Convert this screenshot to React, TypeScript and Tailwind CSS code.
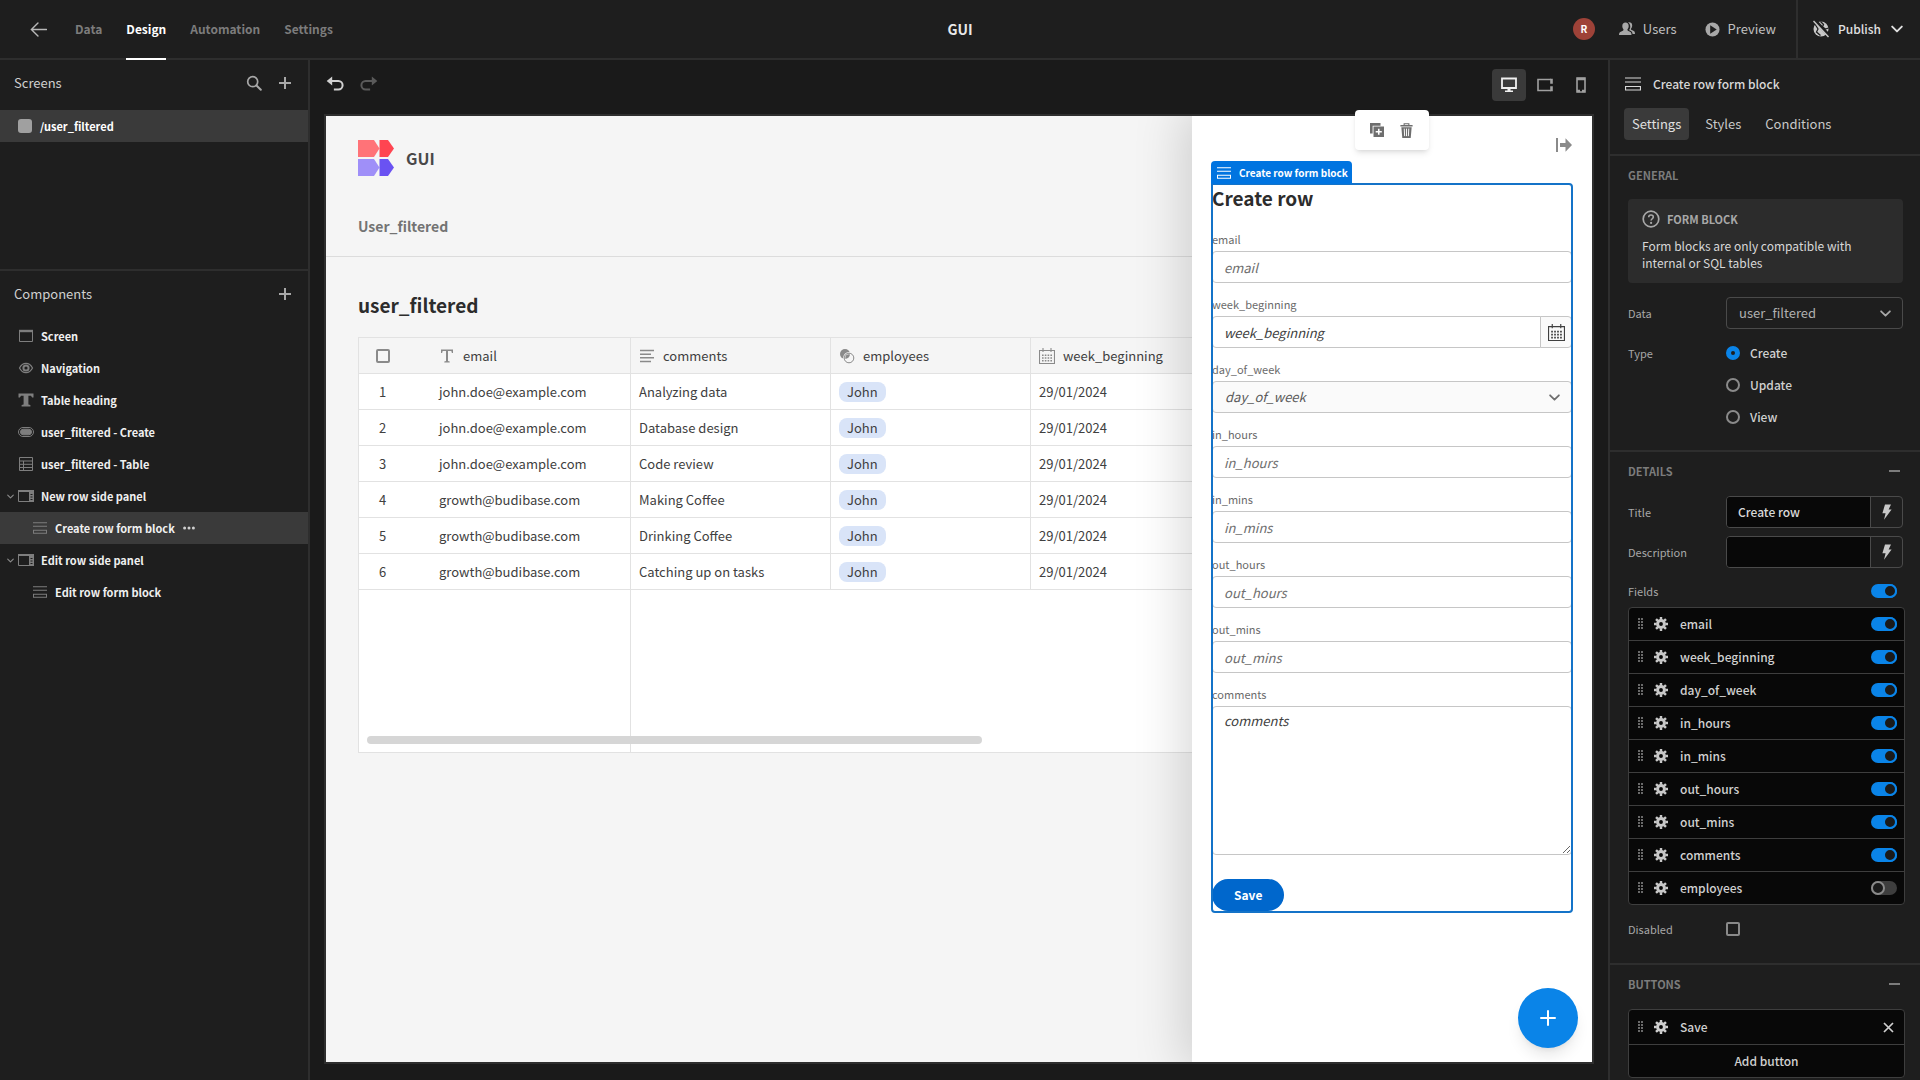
import { useState } from 'react';
import type { ReactNode } from 'react';

const rows = [
  ['john.doe@example.com', 'Analyzing data'],
  ['john.doe@example.com', 'Database design'],
  ['john.doe@example.com', 'Code review'],
  ['growth@budibase.com', 'Making Coffee'],
  ['growth@budibase.com', 'Drinking Coffee'],
  ['growth@budibase.com', 'Catching up on tasks'],
];

const tree = [
  { name: 'Screen', icon: 'screen' },
  { name: 'Navigation', icon: 'eye' },
  { name: 'Table heading', icon: 'text' },
  { name: 'user_filtered - Create', icon: 'button' },
  { name: 'user_filtered - Table', icon: 'table' },
  { name: 'New row side panel', icon: 'panel', open: true },
  { name: 'Create row form block', icon: 'form', nested: true, selected: true },
  { name: 'Edit row side panel', icon: 'panel', open: true },
  { name: 'Edit row form block', icon: 'form', nested: true },
];

const fieldNames = [
  'email',
  'week_beginning',
  'day_of_week',
  'in_hours',
  'in_mins',
  'out_hours',
  'out_mins',
  'comments',
  'employees',
];

type IconProps = { className?: string };

function Svg({ className = '', box = 16, children }: IconProps & { box?: number; children: ReactNode }) {
  return (
    <svg viewBox={`0 0 ${box} ${box}`} className={`shrink-0 ${className}`} fill="none" stroke="currentColor" aria-hidden="true">
      {children}
    </svg>
  );
}

function PlusIcon({ className }: IconProps) {
  return (
    <Svg className={className}>
      <path d="M8 2v12M2 8h12" strokeWidth="2" />
    </Svg>
  );
}

function ChevronIcon({ className }: IconProps) {
  return (
    <Svg className={className} box={10}>
      <path d="M1 3l4 4 4-4" strokeWidth="1.6" strokeLinecap="round" strokeLinejoin="round" />
    </Svg>
  );
}

function GearIcon({ className }: IconProps) {
  return (
    <Svg className={className}>
      <circle cx="8" cy="8" r="3.9" strokeWidth="3.4" />
      <path
        d="M8 0v3M8 13v3M0 8h3M13 8h3M2.3 2.3l2.2 2.2M11.5 11.5l2.2 2.2M2.3 13.7l2.2-2.2M11.5 4.5l2.2-2.2"
        strokeWidth="2.8"
      />
    </Svg>
  );
}

function BoltIcon({ className }: IconProps) {
  return (
    <Svg className={className}>
      <path d="M6 .5h6L9.6 5.6h3L5 15.8l1.6-6.6H3.4z" fill="currentColor" stroke="none" />
    </Svg>
  );
}

function DragIcon({ className }: IconProps) {
  return (
    <svg viewBox="0 0 6 12" className={`shrink-0 ${className}`} fill="currentColor" aria-hidden="true">
      {[0, 3, 6, 9].map((y) => (
        <path key={y} d={`M0 ${y}h2v2h-2zM3 ${y}h2v2h-2z`} />
      ))}
    </svg>
  );
}

function FormIcon({ className }: IconProps) {
  return (
    <Svg className={className}>
      <path d="M0 2h16M0 6h16M.5 10.5h15V14H.5z" strokeWidth="1.2" />
    </Svg>
  );
}

function CalendarIcon({ className }: IconProps) {
  return (
    <Svg className={className}>
      <path d="M.5 2.5h15v13H.5zM4 0v4M12 0v4" strokeWidth="1.1" />
      <path d="M3 7.2h10M3 10h10M3 12.8h10" strokeWidth="1.6" strokeDasharray="1.6 1.2" />
    </Svg>
  );
}

function TreeIcon({ name, className }: IconProps & { name: string }) {
  if (name === 'form') return <FormIcon className={className} />;
  return (
    <Svg className={className}>
      {name === 'screen' && (
        <>
          <path d="M1.5 2.5h13v11h-13z" />
          <path d="M1 3h14" strokeWidth="2.4" />
        </>
      )}
      {name === 'eye' && (
        <>
          <path d="M1.5 8C3 5 5.3 3.4 8 3.4S13 5 14.5 8c-1.5 3-3.8 4.6-6.5 4.6S3 11 1.5 8z" strokeWidth="1.2" />
          <circle cx="8" cy="8" r="2.6" strokeWidth="2" />
        </>
      )}
      {name === 'text' && (
        <path
          d="M.5 1.5h15v4h-1.4L13 3.7h-2.6v8.8l2 .6v1.4H3.600v-1.4l2-.6V3.7H3L1.900 5.5H.5z"
          fill="currentColor"
          stroke="none"
        />
      )}
      {name === 'button' && (
        <>
          <rect x=".5" y="3.5" width="15" height="9" rx="4.5" />
          <rect x="2.5" y="5.2" width="11" height="5.6" rx="2.8" fill="currentColor" />
        </>
      )}
      {name === 'table' && <path d="M1.5 1.5h13v13h-13zM1.5 5h13M1.5 8.3h13M1.5 11.5h13M5.5 5v9.5" />}
      {name === 'panel' && (
        <>
          <path d="M.5 2.5h15v11H.5z" />
          <path d="M0 3h16" strokeWidth="2" />
          <path d="M11 4h5v10h-5z" fill="currentColor" stroke="none" />
          <path d="M12.5 6.5h2M12.5 9h2M12.5 11.5h2" stroke="#1e1e1e" />
        </>
      )}
    </Svg>
  );
}

function Logo() {
  return (
    <svg viewBox="0 0 36 36" className="size-9" aria-hidden="true">
      <path d="M0 0h16l5.5 8.5L16 17H0z" fill="#ff7378" />
      <path d="M21.5 0H30l6 8.5-6 8.5h-8.5z" fill="#ff4551" />
      <path d="M0 19h16l5.5 8.5L16 36H0z" fill="#9f8ff8" />
      <path d="M21.5 19H30l6 8.5-6 8.5h-8.5z" fill="#6a52f2" />
    </svg>
  );
}

function Toggle({ label, defaultChecked = true }: { label: string; defaultChecked?: boolean }) {
  return (
    <input
      type="checkbox"
      role="switch"
      aria-label={label}
      defaultChecked={defaultChecked}
      className="relative h-3.5 w-[26px] shrink-0 appearance-none rounded-full bg-[#3e3e3e] before:absolute before:top-0 before:left-0 before:size-3.5 before:rounded-full before:border-2 before:border-[#8a8a8a] before:bg-[#1a1a1a] checked:bg-[#0a84e8] checked:before:left-3 checked:before:border-[#0a84e8]"
    />
  );
}

function TopBar() {
  return (
    <header className="grid h-[60px] shrink-0 grid-cols-[1fr_auto_1fr] items-stretch border-b-2 border-[#2e2e2e] bg-[#1e1e1e]">
      <nav className="flex items-stretch gap-6 pl-[30px] text-[12px] font-bold text-[#7c7c7c]">
        <a href="#back" aria-label="Back" className="mr-1 flex items-center text-[#b8b8b8]">
          <Svg className="size-[17px]">
            <path d="M15.5 8h-14M7.5 1.8L1.3 8l6.2 6.2" strokeWidth="1.3" strokeLinecap="round" />
          </Svg>
        </a>
        <a href="#data" className="flex items-center">Data</a>
        <a href="#design" className="-mb-0.5 flex items-center border-b-2 border-white text-white">Design</a>
        <a href="#automation" className="flex items-center">Automation</a>
        <a href="#settings" className="flex items-center">Settings</a>
      </nav>
      <h1 className="flex items-center text-[14px] font-bold text-[#e8e8e8]">GUI</h1>
      <div className="flex items-stretch justify-end text-[#c0c0c0]">
        <span className="mr-6 flex size-[22px] items-center justify-center self-center rounded-full bg-[#9e4238] text-[10px] font-bold text-white">
          R
        </span>
        <button className="mr-7 flex items-center gap-2">
          <svg viewBox="0 0 16 16" className="size-4" fill="#a8a8a8" aria-hidden="true">
            <path d="M6.5 1.5c2 0 3.2 1.500 3.2 3.5 0 1.700-.7 2.700-1.300 3.500-.2.900.3 1.200 2.100 1.900 1.600.6 2 1.500 2 3.600H0c0-2.100.6-3 2.300-3.600 1.800-.7 2.400-1 2.200-1.900C3.900 7.700 3.300 6.700 3.300 5c0-2 1.200-3.500 3.200-3.500z" />
            <path d="M10 1.3c2 0 3.2 1.200 3.2 3.200 0 1.600-.7 2.600-1.300 3.300-.2.800.3 1.100 2 1.800 1.400.5 2.100 1.300 2.100 3.400h-2.400c-.2-1.900-1-2.800-2.900-3.500-.6-.3-.5-.6-.3-1C12 6.500 11.500 2.500 9 1.500z" />
          </svg>
          Users
        </button>
        <button className="mr-5 flex items-center gap-2">
          <svg viewBox="0 0 16 16" className="size-[15px]" aria-hidden="true">
            <circle cx="8" cy="8" r="7.5" fill="#a8a8a8" />
            <path d="M5.5 3.5l7 4.5-7 4.5z" fill="#1e1e1e" />
          </svg>
          Preview
        </button>
        <button className="flex items-center border-l-2 border-[#2e2e2e] pr-[17px] pl-3.5 text-[12px] font-medium text-[#e0e0e0]">
          <svg viewBox="0 0 18 18" className="mr-2 size-[18px]" aria-hidden="true">
            <circle cx="9" cy="9" r="7.5" fill="#c8c8c8" />
            <path d="M8.5 1.5l3 3-1 2.5 3 2 3-1M3 4l3 5-1.5 3 4 3.5" fill="none" stroke="#1e1e1e" strokeWidth="1.3" />
            <path d="M2.5 0L18 16.5" stroke="#1e1e1e" strokeWidth="3.5" />
            <path d="M1.5 1l15 16" stroke="#c8c8c8" strokeWidth="1.4" />
          </svg>
          Publish
          <ChevronIcon className="ml-2.5 size-3" />
        </button>
      </div>
    </header>
  );
}

function LeftPanel() {
  return (
    <aside className="flex w-[310px] shrink-0 flex-col border-r-2 border-[#2e2e2e] bg-[#1e1e1e]">
      <section className="h-[211px] border-b-2 border-[#2e2e2e]">
        <div className="flex h-[50px] items-center pr-[15px] pb-1 pl-3.5">
          <h2 className="flex-1 text-[#d0d0d0]">Screens</h2>
          <button aria-label="Search screens" className="mr-[15px]">
            <Svg className="size-4 text-[#a8a8a8]">
              <circle cx="6.7" cy="6.7" r="5" strokeWidth="1.7" />
              <path d="M10.5 10.5l4.3 4.3" strokeWidth="2" strokeLinecap="round" />
            </Svg>
          </button>
          <button aria-label="Add screen">
            <PlusIcon className="size-4 text-[#a8a8a8]" />
          </button>
        </div>
        <a href="#user_filtered" className="flex h-8 items-center gap-2 bg-[#3a3a3a] pl-[18px] text-[11px] font-bold text-white">
          <span className="size-3.5 rounded-[3px] bg-[#a0a0a0]" />
          /user_filtered
        </a>
      </section>
      <section>
        <div className="flex h-[49px] items-center pr-[15px] pb-1 pl-3.5">
          <h2 className="flex-1 text-[#d0d0d0]">Components</h2>
          <button aria-label="Add component">
            <PlusIcon className="size-4 text-[#a8a8a8]" />
          </button>
        </div>
        <ul>
          {tree.map((item) => (
            <li
              key={item.name}
              className={`flex h-8 items-center text-[11px] font-bold text-[#f0f0f0] ${item.nested ? 'pl-8' : 'pl-[7px]'} ${item.selected ? 'bg-[#3a3a3a]' : ''}`}
            >
              {!item.nested && (
                <span className="flex w-[11px] text-[#8a8a8a]">{item.open && <ChevronIcon className="size-[7px]" />}</span>
              )}
              <TreeIcon name={item.icon} className={`${item.nested ? 'mr-2 ml-px size-3.5' : 'mr-[7px] size-4'} text-[#7e7e7e]`} />
              <span>{item.name}</span>
              {item.selected && (
                <button aria-label="More" className="ml-2 text-[#d0d0d0]">
                  <svg viewBox="0 0 12 4" className="h-1 w-3" fill="currentColor" aria-hidden="true">
                    <circle cx="1.6" cy="2" r="1.5" />
                    <circle cx="6" cy="2" r="1.5" />
                    <circle cx="10.4" cy="2" r="1.5" />
                  </svg>
                </button>
              )}
            </li>
          ))}
        </ul>
      </section>
    </aside>
  );
}

function HeaderCell({ icon, children }: { icon: ReactNode; children: ReactNode }) {
  return (
    <div className="flex items-center gap-2 text-[#8a8a8a]">
      {icon}
      <span className="text-[#404040]">{children}</span>
    </div>
  );
}

function DataTable() {
  return (
    <div className="relative h-[416px] overflow-hidden border border-[#e2e2e2] bg-white">
      <table className="w-full table-fixed border-separate border-spacing-0 text-left text-[#404040]">
        <colgroup>
          <col className="w-[72px]" />
          <col className="w-[200px]" />
          <col className="w-[200px]" />
          <col className="w-[200px]" />
          <col />
        </colgroup>
        <thead className="bg-[#f5f5f5]">
          <tr className="h-9 *:border-b *:border-[#e2e2e2] *:p-0 *:font-normal">
            <th className="pl-[17px]!">
              <input
                type="checkbox"
                aria-label="Select all rows"
                className="block size-3.5 appearance-none rounded-[2px] border-2 border-[#8a8a8a]"
              />
            </th>
            <th className="border-r pl-2!">
              <HeaderCell
                icon={
                  <svg viewBox="0 0 16 16" className="size-4" fill="currentColor" aria-hidden="true">
                    <path d="M2 1.5h12V5h-1.1L12.3 3H9v10l1.7.4v1H5.3v-1L7 13V3H3.700L3.100 5H2z" />
                  </svg>
                }
              >
                email
              </HeaderCell>
            </th>
            <th className="border-r pl-2!">
              <HeaderCell
                icon={
                  <Svg className="size-4">
                    <path d="M1 2.5h14M1 6.2h11M1 9.8h14M1 13.5h11" strokeWidth="1.5" />
                  </Svg>
                }
              >
                comments
              </HeaderCell>
            </th>
            <th className="border-r pl-2!">
              <HeaderCell
                icon={
                  <Svg className="size-4">
                    <circle cx="6" cy="6" r="5" fill="currentColor" stroke="none" />
                    <circle cx="10" cy="10" r="4.8" stroke="#f5f5f5" strokeWidth="2.2" />
                    <circle cx="10" cy="10" r="4.8" />
                  </Svg>
                }
              >
                employees
              </HeaderCell>
            </th>
            <th className="pl-2!">
              <HeaderCell icon={<CalendarIcon className="size-4" />}>week_beginning</HeaderCell>
            </th>
          </tr>
        </thead>
        <tbody>
          {rows.map(([email, comment], i) => (
            <tr key={i} className="h-9 *:border-b *:border-[#e2e2e2] *:py-0 *:pr-0">
              <td className="pl-5">{i + 1}</td>
              <td className="border-r pl-2">{email}</td>
              <td className="border-r pl-2">{comment}</td>
              <td className="border-r pl-2">
                <span className="inline-block rounded-lg bg-[#d9e4f8] px-2 leading-5">John</span>
              </td>
              <td className="pl-2">29/01/2024</td>
            </tr>
          ))}
          <tr className="h-[170px]">
            <td />
            <td className="border-r border-[#e2e2e2]" />
            <td colSpan={3} />
          </tr>
        </tbody>
      </table>
      <div className="absolute bottom-2 left-2 h-2 w-[615px] rounded-full bg-[#d6d6d6]" />
    </div>
  );
}

const inputClass =
  'h-8 w-full rounded-[4px] border border-[#c6c6c6] bg-white px-[11px] text-[#404040] italic placeholder:text-[#6e6e6e]';

function FormField({ name }: { name: string }) {
  const id = `form-${name}`;
  return (
    <div>
      <label htmlFor={id} className="flex h-[25px] items-center text-[11px] text-[#6a6a6a]">
        {name}
      </label>
      {name === 'week_beginning' ? (
        <div className="flex">
          <input id={id} placeholder={name} className={`${inputClass} rounded-r-none placeholder:text-[#404040]!`} />
          <button
            type="button"
            aria-label="Pick a date"
            className="-ml-px flex h-8 w-8 shrink-0 items-center justify-center rounded-r-[4px] border border-[#c6c6c6] bg-[#fafafa] text-[#404040]"
          >
            <CalendarIcon className="size-[17px]" />
          </button>
        </div>
      ) : name === 'day_of_week' ? (
        <div className="relative">
          <select id={id} className={`${inputClass} appearance-none bg-[#fafafa]! px-3! text-[#5a5a5a]!`}>
            <option>day_of_week</option>
          </select>
          <ChevronIcon className="pointer-events-none absolute top-[11px] right-3 size-[11px] text-[#6e6e6e]" />
        </div>
      ) : name === 'comments' ? (
        <textarea id={id} placeholder={name} className={`${inputClass} block h-[149px]! py-1 placeholder:text-[#404040]!`} />
      ) : (
        <input id={id} placeholder={name} className={inputClass} />
      )}
    </div>
  );
}

function SidePanel() {
  return (
    <div className="absolute inset-y-0 right-0 w-[400px] bg-white px-5 shadow-[0_0_48px_8px_rgba(0,0,0,0.16)]">
      <div className="flex h-[68px] justify-end pt-[21px]">
        <button aria-label="Close panel" className="h-4 text-[#8a8a8a]">
          <svg viewBox="0 0 16 16" className="size-4" fill="currentColor" aria-hidden="true">
            <path d="M0 1h2v14H0zM4 6h5.5V1.2L16 8l-6.5 6.8V10H4z" />
          </svg>
        </button>
      </div>
      <form className="relative pb-px">
        <h2 className="text-[19px] leading-7 font-bold text-[#2c2c2c]">Create row</h2>
        <div className="mt-3.5 flex flex-col gap-2">
          {fieldNames.slice(0, 8).map((name) => (
            <FormField key={name} name={name} />
          ))}
        </div>
        <button type="button" className="mt-6 block h-8 rounded-full bg-[#0067cc] px-[22px] text-[12px] font-bold text-white">
          Save
        </button>
        {/* selection outline sits above the block's own content */}
        <div className="pointer-events-none absolute -inset-px rounded-[4px] rounded-tl-none border-2 border-[#1473c8]" />
        <div className="absolute bottom-full -left-px flex h-[23px] items-center gap-2 rounded-t-[4px] bg-[#0074e0] pr-1 pl-1.5 text-[10px] font-bold whitespace-nowrap text-white">
          <FormIcon className="size-3.5" />
          Create row form block
        </div>
      </form>
      <button
        aria-label="Add"
        className="absolute right-3.5 bottom-3.5 flex size-[60px] items-center justify-center rounded-full bg-[#0a84e8] text-white shadow-lg"
      >
        <Svg className="size-4">
          <path d="M8 1v14M1 8h14" strokeWidth="2" strokeLinecap="round" />
        </Svg>
      </button>
    </div>
  );
}

function Canvas() {
  const [device, setDevice] = useState('desktop');
  const deviceIcons: Record<string, ReactNode> = {
    desktop: (
      <>
        <path d="M1 1.5h14V11H1z" strokeWidth="1.8" />
        <path d="M6.5 11h3v2.5H12V15H4v-1.5h2.5z" fill="currentColor" stroke="none" />
      </>
    ),
    tablet: (
      <>
        <path d="M14 2.5H1v11h13" strokeWidth="1.6" />
        <path d="M14.5 1.7v5M14.5 9.3v5" strokeWidth="2.6" />
      </>
    ),
    mobile: (
      <>
        <path d="M4 1h8v14H4z" strokeWidth="1.6" />
        <path d="M4 2h8M4 14h3M9 14h3" strokeWidth="2.4" />
      </>
    ),
  };
  return (
    <main className="flex min-w-0 flex-1 flex-col bg-[#1a1a1a] px-3.5 pb-4">
      <div className="flex h-[54px] items-center pb-1">
        <div className="flex flex-1 gap-4 pl-0.5">
          <button aria-label="Undo" className="text-[#d0d0d0]">
            <Svg className="size-[18px]">
              <path d="M3 4.5h8a3.7 3.7 0 010 7.5H7" strokeWidth="1.8" />
              <path d="M5.5.5v8L.6 4.5z" fill="currentColor" stroke="none" />
            </Svg>
          </button>
          <button aria-label="Redo" className="text-[#5a5a5a]">
            <Svg className="size-[18px]">
              <path d="M13 4.5H5A3.7 3.7 0 005 12h4" strokeWidth="1.8" />
              <path d="M10.5.5v8l4.900-4z" fill="currentColor" stroke="none" />
            </Svg>
          </button>
        </div>
        <div className="-mr-1 flex gap-0.5">
          {Object.keys(deviceIcons).map((name) => (
            <button
              key={name}
              aria-label={name}
              onClick={() => setDevice(name)}
              className={`flex h-8 w-[34px] items-center justify-center rounded-[4px] ${device === name ? 'bg-[#3a3a3a] text-[#f0f0f0]' : 'text-[#a0a0a0]'}`}
            >
              <Svg className="size-4">{deviceIcons[name]}</Svg>
            </button>
          ))}
        </div>
      </div>
      <div className="relative flex-1 border-2 border-[#2e2e2e]">
        <div className="relative h-full overflow-hidden bg-[#f5f5f5]">
          <div className="border-b border-[#dcdcdc] px-8 pt-6 pb-[18px]">
            <div className="flex items-center gap-3 text-[16px] font-bold text-[#484848]">
              <Logo />
              GUI
            </div>
            <a href="#user_filtered" className="mt-[38px] block text-[14px] leading-6 font-bold text-[#737373]">
              User_filtered
            </a>
          </div>
          <div className="px-8 pt-8">
            <h2 className="mb-4 text-[19px] leading-8 font-bold text-[#2c2c2c]">user_filtered</h2>
            <DataTable />
          </div>
          <SidePanel />
        </div>
        <div className="absolute -top-1.5 right-[163px] flex h-10 items-center gap-[15px] rounded-[4px] bg-white px-[15px] text-[#6e6e6e] shadow-md">
          <button aria-label="Duplicate">
            <Svg className="size-3.5">
              <path d="M0 0h12v3H3v9H0z" fill="currentColor" stroke="none" />
              <path d="M4 4h12v12H4z" fill="currentColor" stroke="none" />
              <path d="M10 6.5v7M6.5 10h7" stroke="#fff" strokeWidth="1.8" />
            </Svg>
          </button>
          <button aria-label="Delete">
            <Svg className="size-[15px]">
              <path d="M5.5 2V.8h5V2" strokeWidth="1.2" />
              <path d="M1.5 2h13v1.8h-13zM2.5 4.5h11l-1 11.5h-9z" fill="currentColor" stroke="none" />
              <path d="M5.6 6l.4 8M8 6v8M10.4 6l-.4 8" stroke="#fff" />
            </Svg>
          </button>
        </div>
      </div>
    </main>
  );
}

function SettingRow({ label, id, children }: { label: string; id: string; children: ReactNode }) {
  return (
    <div className="flex items-center">
      <label htmlFor={id} className="w-[98px] shrink-0 text-[11px] text-[#a8a8a8]">
        {label}
      </label>
      {children}
    </div>
  );
}

function BindableInput({ id, value }: { id: string; value: string }) {
  return (
    <div className="flex h-8 min-w-0 flex-1 overflow-hidden rounded-[4px] border border-[#4a4a4a]">
      <input id={id} defaultValue={value} className="min-w-0 flex-1 bg-[#080808] px-[11px] text-[12px] font-medium text-[#d8d8d8]" />
      <button
        aria-label="Open bindings"
        className="flex w-8 items-center justify-center border-l border-[#4a4a4a] text-[#c8c8c8]"
      >
        <BoltIcon className="size-4" />
      </button>
    </div>
  );
}

function SectionTitle({ title, collapsible }: { title: string; collapsible?: boolean }) {
  return (
    <div className="flex h-[38px] items-center justify-between pr-[3px]">
      <h3 className="text-[11px] font-bold text-[#7c7c7c]">{title}</h3>
      {collapsible && (
        <button aria-label={`Collapse ${title}`} className="py-1">
          <span className="block h-0.5 w-[11px] bg-[#7c7c7c]" />
        </button>
      )}
    </div>
  );
}

function RightPanel() {
  const [type, setType] = useState('Create');
  return (
    <aside className="w-[312px] shrink-0 overflow-hidden border-l-2 border-[#2e2e2e] bg-[#1e1e1e] text-[#c8c8c8]">
      <div className="border-b-2 border-[#2e2e2e] pb-3.5">
        <h2 className="flex h-12 items-center gap-3 pl-[15px] text-[12px] font-medium text-[#d8d8d8]">
          <FormIcon className="size-4" />
          Create row form block
        </h2>
        <div className="flex gap-0.5 pl-3.5">
          <button className="h-8 rounded-[4px] bg-[#3a3a3a] px-2 text-[#e0e0e0]">Settings</button>
          <button className="h-8 px-3.5">Styles</button>
          <button className="h-8 px-2">Conditions</button>
        </div>
      </div>

      <section className="border-b-2 border-[#2e2e2e] pr-[17px] pb-[17px] pl-[18px]">
        <SectionTitle title="GENERAL" />
        <div className="mt-[5px] rounded-[4px] bg-[#2c2c2c] px-3.5 pt-[11px] pb-3">
          <div className="flex items-center gap-[7px] text-[11px] leading-[18px] font-bold text-[#a8a8a8]">
            <Svg className="size-[18px]" box={18}>
              <circle cx="9" cy="9" r="7.8" strokeWidth="1.7" />
              <path d="M6.7 7.2C6.7 5.7 7.7 5 9 5s2.3.8 2.3 2c0 1.700-2.200 1.800-2.200 3.600" strokeWidth="1.6" />
              <circle cx="9.1" cy="12.9" r="1.1" fill="currentColor" stroke="none" />
            </Svg>
            FORM BLOCK
          </div>
          <p className="mt-[9px] text-[12px] leading-[17px] text-[#d8d8d8]">
            Form blocks are only compatible with internal or SQL tables
          </p>
        </div>
        <div className="mt-3.5">
          <SettingRow label="Data" id="data">
            <div className="relative flex-1">
              <select
                id="data"
                className="h-8 w-full appearance-none rounded-[4px] border border-[#4a4a4a] bg-[#1e1e1e] px-3 text-[#b0b0b0]"
              >
                <option>user_filtered</option>
              </select>
              <ChevronIcon className="pointer-events-none absolute top-[11px] right-3 size-[11px] text-[#a8a8a8]" />
            </div>
          </SettingRow>
        </div>
        <fieldset className="mt-2 flex">
          <legend className="float-left w-[98px] text-[11px] leading-8 text-[#a8a8a8]">Type</legend>
          <div>
            {['Create', 'Update', 'View'].map((name) => (
              <label key={name} className="flex h-8 items-center gap-2.5 text-[12px] font-medium text-[#d0d0d0]">
                <input
                  type="radio"
                  name="type"
                  checked={type === name}
                  onChange={() => setType(name)}
                  className="size-3.5 appearance-none rounded-full border-2 border-[#8a8a8a] checked:border-[5px] checked:border-[#0a84e8]"
                />
                {name}
              </label>
            ))}
          </div>
        </fieldset>
      </section>

      <section className="border-b-2 border-[#2e2e2e] pr-[17px] pb-6 pl-[18px]">
        <SectionTitle title="DETAILS" collapsible />
        <div className="mt-1.5 flex flex-col gap-2">
          <SettingRow label="Title" id="title">
            <BindableInput id="title" value="Create row" />
          </SettingRow>
          <SettingRow label="Description" id="description">
            <BindableInput id="description" value="" />
          </SettingRow>
        </div>
        <div className="mt-2.5 mb-[3px] flex h-[26px] items-center justify-between pr-1.5">
          <span className="text-[11px] text-[#a8a8a8]">Fields</span>
          <Toggle label="All fields" />
        </div>
        <ul className="-mr-0.5 divide-y divide-[#3e3e3e] rounded-[4px] border border-[#3e3e3e] bg-[#080808]">
          {fieldNames.map((name) => (
            <li key={name} className="flex h-[33px] items-center pr-[7px] pl-[9px] last:h-8">
              <DragIcon className="mr-2.5 h-3 w-1.5 text-[#6a6a6a]" />
              <button aria-label={`Configure ${name}`} className="mr-3">
                <GearIcon className="size-3.5" />
              </button>
              <span className="flex-1 text-[12px] font-medium text-[#d0d0d0]">{name}</span>
              <Toggle label={name} defaultChecked={name !== 'employees'} />
            </li>
          ))}
        </ul>
        <div className="mt-3.5">
          <SettingRow label="Disabled" id="disabled">
            <input id="disabled" type="checkbox" className="size-3.5 appearance-none rounded-[2px] border-2 border-[#8a8a8a]" />
          </SettingRow>
        </div>
      </section>

      <section className="pr-[17px] pl-[18px]">
        <SectionTitle title="BUTTONS" collapsible />
        <div className="mt-1.5 -mr-0.5 rounded-[4px] border border-[#3e3e3e] bg-[#080808] text-[12px] font-medium text-[#d0d0d0]">
          <div className="flex h-[35px] items-center border-b border-[#3e3e3e] pr-2.5 pl-[9px]">
            <DragIcon className="mr-2.5 h-3 w-1.5 text-[#6a6a6a]" />
            <button aria-label="Configure Save" className="mr-3">
              <GearIcon className="size-3.5" />
            </button>
            <span className="flex-1">Save</span>
            <button aria-label="Remove Save">
              <Svg className="size-[11px]" box={11}>
                <path d="M1 1l9 9M10 1l-9 9" strokeWidth="1.7" />
              </Svg>
            </button>
          </div>
          <button className="block h-8 w-full">Add button</button>
        </div>
      </section>
    </aside>
  );
}

export default function App() {
  return (
    <div className="flex h-screen flex-col overflow-hidden bg-[#1a1a1a] font-['Noto_Sans_CJK_SC',sans-serif] text-[13px] leading-5">
      <TopBar />
      <div className="flex min-h-0 flex-1">
        <LeftPanel />
        <Canvas />
        <RightPanel />
      </div>
    </div>
  );
}
